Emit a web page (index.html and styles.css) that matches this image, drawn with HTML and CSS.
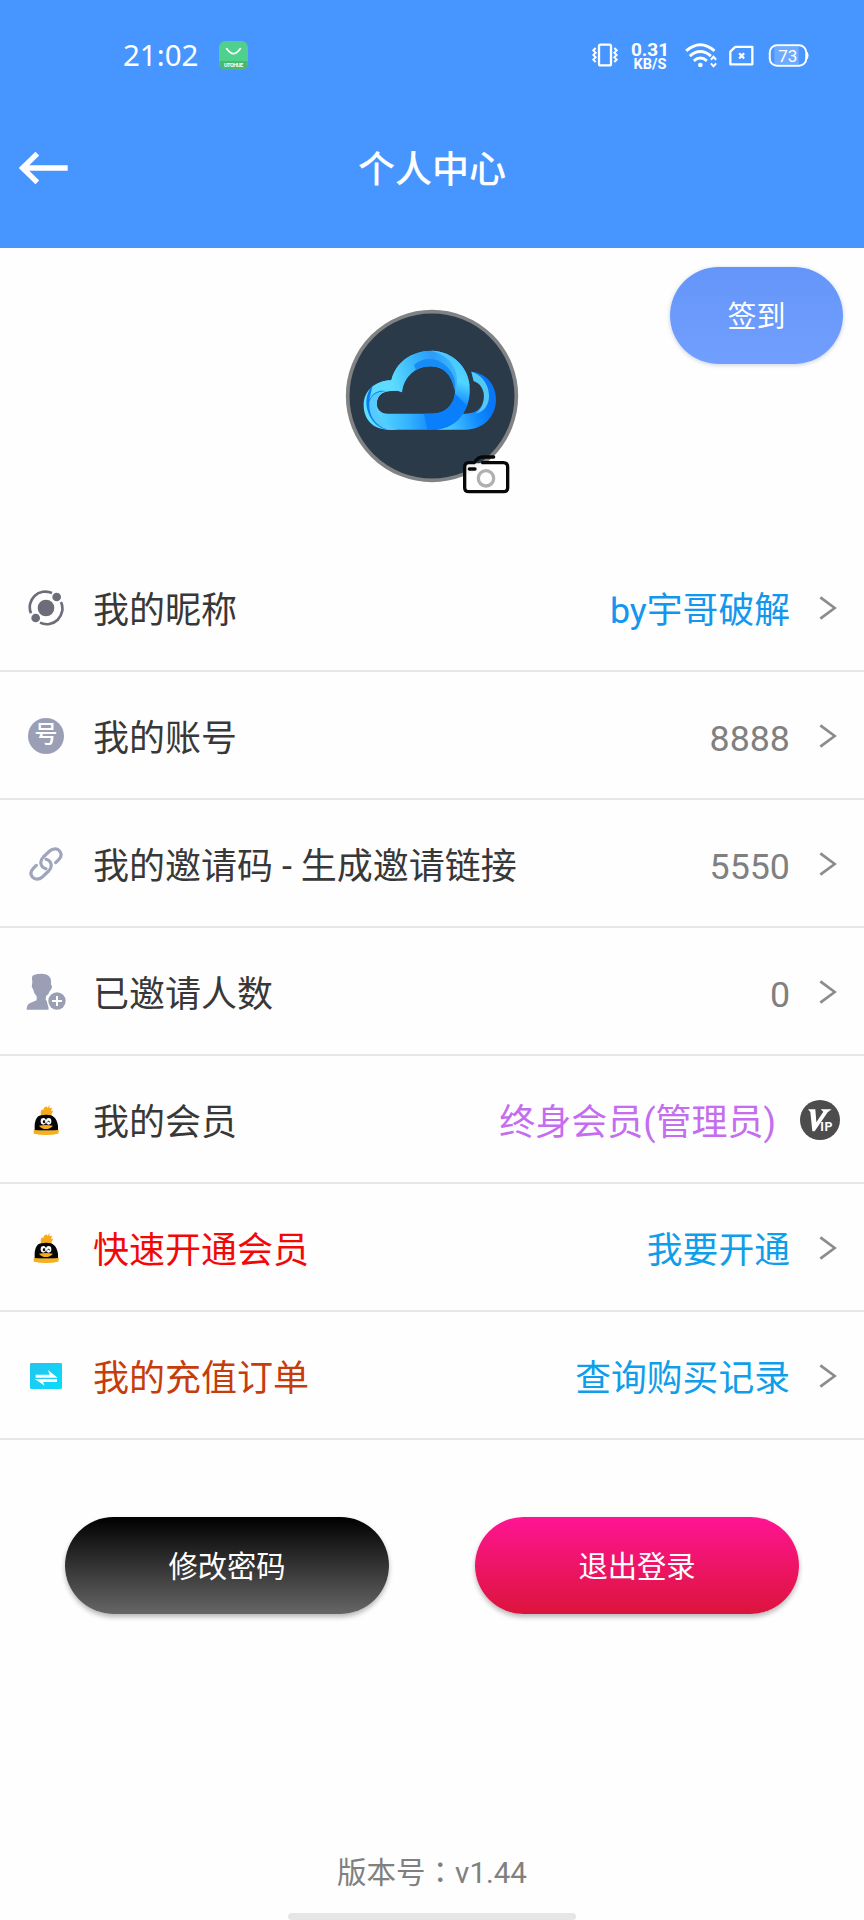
FILE: index.html
```html
<!DOCTYPE html>
<html lang="zh-CN">
<head>
<meta charset="utf-8">
<title>个人中心</title>
<link rel="stylesheet" href="styles.css">
</head>
<body>
<svg class="defs" aria-hidden="true">
  <defs>
    <symbol id="chevron" viewBox="0 0 54 72"><path d="M4 4 L47 36 L4 68" fill="none" stroke="#8c8c8c" stroke-width="8"/></symbol>
    <symbol id="penguin" viewBox="97 100 84 96">
      <path d="M124 137 L123 124 L127 115 L131 119 L133 111 L141 107 L143 112 L150 103 L149 113 L158 111 L154 120 L160 120 L154 136 Z" fill="#f5a91d"/>
      <path d="M105 180 V164 C106 146 114 134 125 134 Q140 130 154 134 C167 139 173 151 175 166 V180 Z" fill="#050505"/>
      <path d="M102 178 Q140 181 178 178 L176 189 Q140 197 102 189 Z" fill="#f5b01f"/>
      <ellipse cx="131" cy="152" rx="8" ry="10" fill="#fff"/><ellipse cx="147" cy="152" rx="8" ry="10" fill="#fff"/>
      <ellipse cx="133" cy="153" rx="3.5" ry="5" fill="#111"/><path d="M143 155 Q147 147 151 155" fill="none" stroke="#111" stroke-width="3"/>
      <path d="M118 165 Q139 161 160 165 Q151 175 139 175 Q126 175 118 165Z" fill="#f5a91d"/>
    </symbol>
  </defs>
</svg>
<header class="header">
  <div class="status">
    <span class="clock">21:02</span>
    <svg class="app-icon" viewBox="0 0 88 88">
      <rect width="88" height="88" rx="20" fill="#4fd08c"/>
      <path d="M1 61 H87 V68 Q87 88 67 88 H21 Q1 88 1 68Z" fill="#49b96b"/>
      <path d="M23 23 Q44 54 65 23" fill="none" stroke="#fff" stroke-width="5" stroke-linecap="round"/>
      <text x="15" y="79" textLength="58" class="app-name">UTOHUE</text>
    </svg>
    <svg class="vibrate" viewBox="97 66 78 78" fill="none" stroke="#fff">
      <rect x="118" y="74" width="36" height="62" rx="5" stroke-width="7"/>
      <path d="M108 84 l-7 7 7 7 -7 7 7 7 -7 7 7 7M164 84 l7 7 -7 7 7 7 -7 7 7 7 -7 7" stroke-width="6"/>
    </svg>
    <div class="speed"><b>0.31</b><b class="unit">KB/S</b></div>
    <svg class="wifi" viewBox="374 64 99 82" fill="none" stroke="#fff">
      <path d="M377 91 Q420 54 463 91M388 107 Q420 79 452 107M400 121 Q420 104 440 121" stroke-width="9"/>
      <circle cx="420" cy="134" r="7" fill="#fff" stroke="none"/>
      <path d="M452 118 L460 109 L468 118M452 129 L460 138 L468 129" stroke-width="6"/>
    </svg>
    <svg class="sim" viewBox="507 70 76 70" fill="none" stroke="#fff">
      <path d="M526 79 H578 V132 H511 V93 Z" stroke-width="7" stroke-linejoin="round"/>
      <path d="M538 98 L553 114M553 98 L538 114" stroke-width="7"/>
    </svg>
    <svg class="battery" viewBox="624 68 124 76">
      <rect x="643" y="79" width="74" height="54" fill="#6eaaff"/>
      <rect x="629" y="75" width="111" height="62" rx="22" fill="none" stroke="#fff" stroke-width="6"/>
      <path d="M742 93 Q752 106 742 119Z" fill="#fff"/>
      <text x="684" y="125" text-anchor="middle" class="battery-level">73</text>
    </svg>
  </div>
  <div class="titlebar">
    <svg class="back" viewBox="58 392 150 102"><path d="M204 443 H70M113 400 L69 443 L113 486" fill="none" stroke="#fff" stroke-width="16"/></svg>
    <h1 class="title">个人中心</h1>
  </div>
</header>
<main>
  <section class="profile">
    <svg class="avatar" viewBox="0 0 612 660">
      <defs>
        <linearGradient id="bottom" x1="120" x2="400" y1="400" y2="380" gradientUnits="userSpaceOnUse"><stop stop-color="#5fe0ff"/><stop offset=".4" stop-color="#35b4ff"/><stop offset=".75" stop-color="#087dfa"/></linearGradient>
        <linearGradient id="arch" x1="190" x2="410" y1="290" y2="230" gradientUnits="userSpaceOnUse"><stop stop-color="#5ddcff"/><stop offset=".35" stop-color="#38b5fb"/><stop offset=".6" stop-color="#2b9cf8"/><stop offset="1" stop-color="#4ac5fb"/></linearGradient>
        <linearGradient id="right" x1="330" x2="480" y1="400" y2="350" gradientUnits="userSpaceOnUse"><stop stop-color="#58d5ff"/><stop offset=".7" stop-color="#118bff"/><stop offset="1" stop-color="#0876f6"/></linearGradient>
        <linearGradient id="loop" x1="330" x2="400" y1="400" y2="200" gradientUnits="userSpaceOnUse"><stop stop-color="#0078fb"/><stop offset=".35" stop-color="#128dff"/><stop offset=".65" stop-color="#50d5ff"/><stop offset="1" stop-color="#48c5ff"/></linearGradient>
      </defs>
      <circle cx="306" cy="318" r="253" fill="#2b3a49" stroke="#808283" stroke-width="11"/>
      <path d="M424 245 C466 248 498 283 498 328 C498 384 456 419 407 419 H320 L350 371 H407 C444 371 464 348 464 313 C462 292 450 278 431 273 Z" fill="url(#right)"/>
      <path d="M424 245 C452 253 475 278 477 314 C479 344 461 366 436 371 C457 357 464 331 461 309 C457 289 445 278 431 273Z" fill="#54c9f5"/>
      <path d="M184 271 C135 271 101 303 101 346 C101 389 130 419 174 419 H292 C369 419 419 367 419 300 C419 235 371 183 305 182 C243 182 196 219 184 271Z M216 307 C221 259 259 228 302 229 C345 230 375 261 375 303 C375 347 344 371 307 371 H173 C153 371 140 358 140 339 C140 317 154 305 174 304 C191 303 200 300 216 307Z" fill="url(#bottom)" fill-rule="evenodd"/>
      <path d="M184 271 C196 219 243 182 305 182 C368 184 414 231 419 286 L373 326 C386 267 351 230 302 229 C259 228 221 259 216 307 C200 300 188 303 174 304 C148 307 139 327 141 344 L116 311 C130 282 157 271 184 271Z" fill="url(#arch)"/>
      <path d="M305 182 C379 205 391 257 375 315 C369 351 340 371 307 371 H292 L320 419 C384 412 419 361 419 300 C419 235 371 183 305 182Z" fill="url(#loop)"/>
      <path d="M307 371 C345 371 369 345 375 311 L410 345 C393 390 360 413 320 419 L292 419 L282 371Z" fill="#0a7ffc"/>
      <path d="M252 225 C292 188 354 211 373 265 C375 276 376 291 373 302 C366 252 335 227 302 229 C285 230 271 233 258 241Z" fill="#168df6"/>
      <path d="M128 286 C97 322 107 374 138 403 C149 412 160 418 174 419 C141 399 128 371 131 341 C134 314 155 305 175 304 C147 299 132 305 118 329Z" fill="#087bf5"/>
      <path d="M118 336 C116 372 130 405 174 419 H200 C158 402 137 375 140 342 C140 321 154 306 176 304 C142 301 124 315 118 336Z" fill="#57cbff"/>
      <path d="M404 520 H520 Q532 520 532 532 V595 Q532 606 520 606 H416 Q404 606 404 594Z" fill="#fff" fill-opacity=".93"/>
      <path d="M458 518 H520 Q533 518 533 531 V593 Q533 605 520 605 H417 Q404 605 404 593 V531 Q404 518 417 518 H432 Q445 501 457 501 H491M418 537 H435" fill="none" stroke="#080808" stroke-width="10" stroke-linecap="round" stroke-linejoin="round"/>
      <circle cx="468" cy="565" r="23" fill="none" stroke="#b0b0b0" stroke-width="10"/>
    </svg>
    <button class="button signin">签到</button>
  </section>
  <ul class="list">
    <li class="row">
      <span class="lead"><svg width="36" height="36" viewBox="85 90 108 108">
        <g fill="none" stroke="#6c6d78" stroke-width="8"><path d="M94 160 A47 47 0 0 1 157 99"/><path d="M184 126 A47 47 0 0 1 121 188"/></g>
        <g fill="#6c6d78"><circle cx="139" cy="144" r="25"/><circle cx="171" cy="111" r="13"/><circle cx="108" cy="174" r="13"/></g></svg></span>
      <span class="label">我的昵称</span><span class="value azure">by宇哥破解</span><svg class="chevron"><use href="#chevron"/></svg>
    </li>
    <li class="row">
      <span class="lead"><span class="badge">号</span></span>
      <span class="label">我的账号</span><span class="value">8888</span><svg class="chevron"><use href="#chevron"/></svg>
    </li>
    <li class="row">
      <span class="lead"><svg width="34" height="34" viewBox="88 81 102 102" fill="none" stroke="#9fa5bb" stroke-width="9.5" stroke-linecap="round">
        <path d="M139 146 C121 141 119 123 131 111 L150 93 C160 84 173 85 179 92 C187 101 185 111 177 119 L168 128"/>
        <path d="M139 118 C157 123 159 141 147 153 L128 171 C118 180 105 179 99 172 C91 163 93 153 101 145 L110 136"/></svg></span>
      <span class="label">我的邀请码 - 生成邀请链接</span><span class="value">5550</span><svg class="chevron"><use href="#chevron"/></svg>
    </li>
    <li class="row">
      <span class="lead"><svg width="40" height="40" viewBox="79 457 120 120" fill="#9a9fb6">
        <path d="M97 478 Q96 468 103 466 Q112 462 127 462 Q151 463 154 482 V495 Q158 496 156 506 Q154 512 151 513 Q147 524 139 530 L138 540 Q145 545 147 570 H81 Q81 555 90 551 L111 542 V530 Q102 520 100 508 Q94 502 97 495 Q99 487 97 478Z"/>
        <circle cx="172" cy="544" r="30" fill="#fff"/><circle cx="172" cy="544" r="26"/>
        <path d="M172 529 V559M157 544 H187" fill="none" stroke="#fff" stroke-width="6"/></svg></span>
      <span class="label">已邀请人数</span><span class="value">0</span><svg class="chevron"><use href="#chevron"/></svg>
    </li>
    <li class="row">
      <span class="lead"><svg class="penguin"><use href="#penguin"/></svg></span>
      <span class="label">我的会员</span><span class="value violet">终身会员(管理员)</span>
      <svg class="vip" viewBox="960 90 120 120"><circle cx="1020" cy="150" r="60" fill="#4d4d4d"/>
        <path d="M984 118 H1006 L1009 157 L1030 125 L1022 118 H1055 L1043 127 L1004 184 H997 L991 126Z" fill="#fff"/>
        <text x="1021" y="183" textLength="36" class="vip-text">IP</text></svg>
    </li>
    <li class="row">
      <span class="lead"><svg class="penguin"><use href="#penguin"/></svg></span>
      <span class="label red">快速开通会员</span><span class="value sky">我要开通</span><svg class="chevron"><use href="#chevron"/></svg>
    </li>
    <li class="row">
      <span class="lead"><svg width="32" height="26" viewBox="91 879 96 78">
        <defs><linearGradient id="card" x2="1" y2="1"><stop stop-color="#25c4ee"/><stop offset="1" stop-color="#08dcfb"/></linearGradient></defs>
        <rect x="91" y="879" width="96" height="78" rx="4" fill="url(#card)"/>
        <path d="M108 914 H150 L145 900 L174 923 H108Z M172 927 H105 L135 947 L130 936 H172Z" fill="#fff"/></svg></span>
      <span class="label rust">我的充值订单</span><span class="value sky">查询购买记录</span><svg class="chevron"><use href="#chevron"/></svg>
    </li>
  </ul>
  <div class="actions">
    <button class="button dark">修改密码</button>
    <button class="button pink">退出登录</button>
  </div>
</main>
<footer class="footer">
  <p class="version">版本号<span class="colon" lang="zh-TW">：</span>v1.44</p>
  <div class="home-bar"></div>
</footer>
</body>
</html>
```
FILE: styles.css
```css
* { box-sizing: border-box; }
body {
  margin: 0;
  width: 864px;
  height: 1920px;
  display: flex;
  flex-direction: column;
  background: #fefefe;
  color: #383838;
  font-family: Roboto, "Noto Sans CJK SC", sans-serif;
  overflow: hidden;
}
svg { display: block; flex: none; }
.defs { position: absolute; width: 0; height: 0; }

.header { height: 248px; background: #4795ff; color: #fff; }
.status { height: 110px; display: flex; align-items: center; padding-left: 123px; }
.clock { width: 96px; font: 29.5px/40px "Noto Sans", sans-serif; }
.app-icon { width: 29px; height: 29px; }
.app-name { font: bold 17px Roboto, sans-serif; fill: #fff; }
.vibrate { width: 26px; height: 26px; margin-left: 344px; }
.speed { width: 40px; margin-left: 12px; padding-top: 1px; display: flex; flex-direction: column; align-items: center; font-size: 19px; line-height: 17px; }
.unit { font-size: 14.5px; line-height: 13px; }
.wifi { width: 33px; height: 27px; margin-left: 15px; }
.sim { width: 25px; height: 23px; margin-left: 11px; }
.battery { width: 41px; height: 25px; margin-left: 14px; }
.battery-level { font: 52px Roboto, sans-serif; fill: #fff; }
.titlebar { height: 116px; display: grid; grid-template-columns: 100px 1fr 100px; align-items: center; }
.back { width: 50px; height: 34px; margin-left: 19px; }
.title { margin: 0; padding-top: 5px; text-align: center; font-size: 37px; line-height: 48px; font-weight: 500; }

.profile { height: 296px; display: grid; grid-template-columns: 330px 204px 1fr; align-items: start; }
.avatar { grid-column: 2; width: 204px; height: 220px; margin-top: 42px; }
.button { height: 97px; border: 0; border-radius: 49px; padding: 3px 0 0; color: #fff; font: 29px/40px Roboto, "Noto Sans CJK SC", sans-serif; box-shadow: 0 3px 5px rgba(0, 0, 0, .28); }
.signin { width: 173px; margin: 19px 21px 0 0; justify-self: end; background: linear-gradient(#6495f8, #719fff); box-shadow: 0 1px 4px rgba(60, 80, 140, .28); }

.list { margin: 0; padding: 0; list-style: none; }
.row { height: 128px; display: flex; align-items: center; border-bottom: 2px solid #e6e6e6; padding: 2px 24px 0 22px; font-size: 36px; line-height: 50px; white-space: nowrap; }
.lead { width: 48px; display: flex; justify-content: center; margin-right: 23px; }
.label { flex: 1; padding-top: 5px; }
.value { padding-top: 5px; color: #808080; font-size: 35.8px; }
.azure { color: #1296ee; }
.sky { color: #109eea; }
.violet { color: #c46df0; font-size: 36px; }
.red { color: #f30808; }
.rust { color: #c63c0b; }
.chevron { width: 18px; height: 24px; margin: 0 3px 0 29px; }
.penguin { width: 28px; height: 32px; }
.badge { width: 36px; height: 36px; border-radius: 50%; background: #9a9fb6; color: #fff; font-size: 23px; line-height: 34px; font-weight: 500; text-align: center; }
.vip { width: 40px; height: 40px; margin-left: 24px; }
.vip-text { font: bold 37px Roboto, sans-serif; fill: #fff; }

.actions { display: flex; justify-content: space-between; padding: 77px 65px 0; }
.dark, .pink { width: 324px; font-size: 29.3px; }
.dark { background: linear-gradient(#000, #666); }
.pink { background: linear-gradient(#ff1493, #dc143c); }

.footer { margin-top: auto; display: flex; flex-direction: column; align-items: center; color: #808080; }
.version { margin: 0 0 20px; font-size: 29.5px; line-height: 40px; }
.colon { font-family: "Noto Sans CJK TC", sans-serif; }
.home-bar { width: 288px; height: 7px; border-radius: 4px; background: #e6e6e6; }
```
